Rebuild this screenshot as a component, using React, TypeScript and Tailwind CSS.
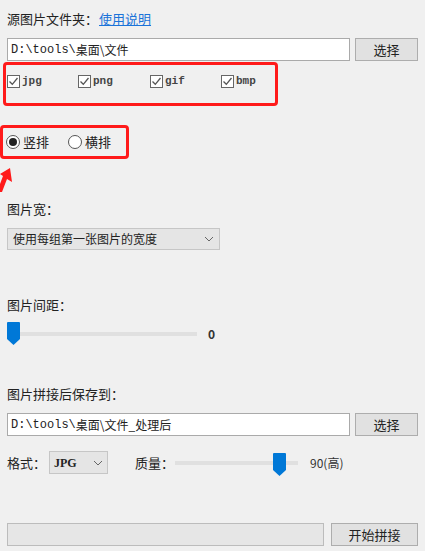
import React from 'react';

const font = { fontFamily: '"Noto Sans CJK SC", "Noto Sans", sans-serif' };

const CheckBox: React.FC<{ label: string; className?: string }> = ({ label, className }) => (
  <div className={`flex items-center ${className ?? ''}`}>
    <span className="w-[13px] h-[13px] border border-[#666] bg-white flex items-center justify-center">
      <svg width="11" height="11" viewBox="0 0 11 11">
        <path d="M1.5 5.5 L4.3 8.3 L9.5 2" stroke="#555" strokeWidth="1.3" fill="none" />
      </svg>
    </span>
    <span className="ml-[2px] text-[11px] font-bold text-[#444] font-['Liberation_Mono',monospace]">{label}</span>
  </div>
);

const Radio: React.FC<{ label: string; checked?: boolean }> = ({ label, checked }) => (
  <div className="flex items-center">
    <span className="w-[14px] h-[14px] rounded-full border border-[#555] bg-white flex items-center justify-center">
      {checked && <span className="w-[8px] h-[8px] rounded-full bg-[#222]" />}
    </span>
    <span className="ml-[3px] text-[13px] text-[#222]">{label}</span>
  </div>
);

const Chevron = () => (
  <svg width="10" height="6" viewBox="0 0 10 6">
    <path d="M1 1 L5 5 L9 1" stroke="#666" strokeWidth="1" fill="none" />
  </svg>
);

const Thumb = () => (
  <svg width="13" height="23" viewBox="0 0 13 23">
    <path d="M0 1 Q0 0 1 0 L12 0 Q13 0 13 1 L13 17 L6.5 23 L0 17 Z" fill="#0078d7" />
  </svg>
);

const App: React.FC = () => {
  return (
    <div className="relative w-[425px] h-[551px] bg-[#f0f0f0] overflow-hidden" style={font}>
      <div className="flex flex-col px-[7px]">
        <div className="flex items-center mt-[10px] h-[18px] text-[13px] text-[#222]">
          <span>源图片文件夹：</span>
          <span className="ml-[1px] text-[#1a73d9] underline">使用说明</span>
        </div>

        <div className="flex mt-[10px] gap-[5px]">
          <div className="w-[343px] h-[23px] bg-white border border-[#aaa] flex items-center px-[3px] text-[12px] text-[#222]">
            <span className="font-['Liberation_Mono',monospace]">D:\tools\</span>
            <span>桌面\文件</span>
          </div>
          <button className="w-[63px] h-[23px] bg-[#e1e1e1] border border-[#adadad] text-[13px] text-[#222]">选择</button>
        </div>

        <div className="-ml-[4px] mt-[1px] w-[275px] h-[44px] border-[3px] border-[#ff1a1a] rounded-[4px] flex items-start pt-[8px] pl-[1px]">
          <CheckBox label="jpg" className="w-[71px]" />
          <CheckBox label="png" className="w-[72px]" />
          <CheckBox label="gif" className="w-[71px]" />
          <CheckBox label="bmp" />
        </div>

        <div className="-ml-[7px] mt-[19px] w-[129px] h-[34px] border-[3px] border-[#ff1a1a] rounded-[4px] flex items-center pl-[3px] gap-[19px]">
          <Radio label="竖排" checked />
          <Radio label="横排" />
        </div>

        <div className="mt-[41px] text-[13px] text-[#222] h-[18px] leading-[18px]">图片宽：</div>
        <div className="mt-[10px] w-[213px] h-[22px] bg-[#e5e5e5] border border-[#c6c6c6] flex items-center justify-between px-[5px] text-[12px] text-[#222]">
          <span>使用每组第一张图片的宽度</span>
          <Chevron />
        </div>

        <div className="mt-[46px] text-[13px] text-[#222] h-[18px] leading-[18px]">图片间距：</div>
        <div className="mt-[8px] flex items-center h-[23px]">
          <div className="relative w-[190px] h-[23px] flex items-center">
            <div className="w-full h-[4px] bg-[#e0e0e0]" />
            <div className="absolute left-0 top-0"><Thumb /></div>
          </div>
          <span className="ml-[11px] text-[12px] font-bold text-[#333]">0</span>
        </div>

        <div className="mt-[40px] text-[13px] text-[#222] h-[18px] leading-[18px]">图片拼接后保存到：</div>
        <div className="flex mt-[10px] gap-[5px]">
          <div className="w-[343px] h-[23px] bg-white border border-[#aaa] flex items-center px-[3px] text-[12px] text-[#222]">
            <span className="font-['Liberation_Mono',monospace]">D:\tools\</span>
            <span>桌面\文件_处理后</span>
          </div>
          <button className="w-[63px] h-[23px] bg-[#e1e1e1] border border-[#adadad] text-[13px] text-[#222]">选择</button>
        </div>

        <div className="mt-[15px] flex items-center h-[23px] text-[13px] text-[#222]">
          <span className="w-[42px]">格式：</span>
          <div className="w-[59px] h-[23px] bg-[#e5e5e5] border border-[#c6c6c6] flex items-center justify-between px-[4px] text-[12px]">
            <span className="font-['Liberation_Serif',serif] font-bold">JPG</span>
            <Chevron />
          </div>
          <span className="ml-[27px] w-[40px]">质量：</span>
          <div className="relative w-[123px] h-[23px] flex items-center">
            <div className="w-full h-[4px] bg-[#e0e0e0]" />
            <div className="absolute left-[98px] top-[2px]"><Thumb /></div>
          </div>
          <span className="ml-[12px] text-[12px] text-[#333]">90(高)</span>
        </div>

        <div className="mt-[49px] flex gap-[7px]">
          <div className="w-[317px] h-[23px] bg-[#e6e6e6] border border-[#bcbcbc]" />
          <button className="w-[87px] h-[23px] bg-[#e1e1e1] border border-[#adadad] text-[13px] text-[#222]">开始拼接</button>
        </div>
      </div>

      <svg className="absolute left-0 top-[168px]" width="14" height="24" viewBox="0 0 14 24">
        <path d="M10 0 L12 14 L7 11 L2 24 L0 24 L0 16 L3 8 L0 6 Z" fill="#ff1a1a" />
      </svg>
    </div>
  );
};

export default App;
